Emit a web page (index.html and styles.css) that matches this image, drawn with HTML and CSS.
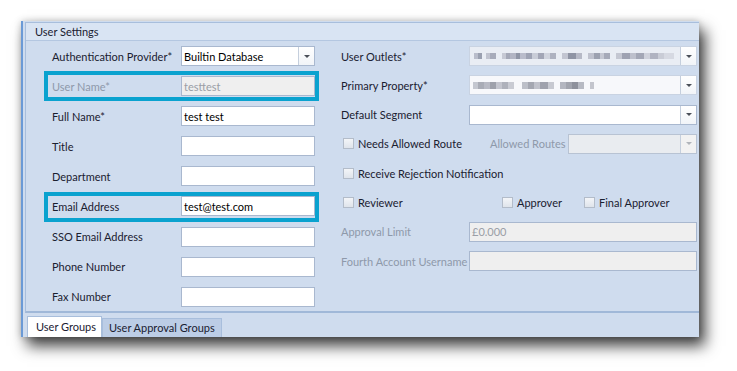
FILE: index.html
```html
<!DOCTYPE html>
<html>
<head>
<meta charset="utf-8">
<link rel="stylesheet" href="styles.css">
</head>
<body>
<div class="window">
  <div class="group">
    <div class="group-header">User Settings</div>
    <div class="group-body">
      <div class="form-left">
        <label class="lbl">Authentication Provider*</label>
        <div class="field combo"><span class="val">Builtin Database</span><span class="btn"><i class="arrow"></i></span></div>
        <label class="lbl disabled">User Name*</label>
        <div class="field readonly"><span class="val">testtest</span></div>
        <label class="lbl">Full Name*</label>
        <div class="field"><span class="val">test test</span></div>
        <label class="lbl">Title</label>
        <div class="field"></div>
        <label class="lbl">Department</label>
        <div class="field"></div>
        <label class="lbl">Email Address</label>
        <div class="field"><span class="val">test@test.com</span></div>
        <label class="lbl">SSO Email Address</label>
        <div class="field"></div>
        <label class="lbl">Phone Number</label>
        <div class="field"></div>
        <label class="lbl">Fax Number</label>
        <div class="field"></div>
      </div>
      <div class="form-right">
        <label class="lbl">User Outlets*</label>
        <div class="field combo blurred"><span class="pix pix-outlets"></span><span class="btn"><i class="arrow"></i></span></div>
        <label class="lbl">Primary Property*</label>
        <div class="field combo blurred light"><span class="pix pix-property"></span><span class="btn"><i class="arrow"></i></span></div>
        <label class="lbl">Default Segment</label>
        <div class="field combo"><span class="val"></span><span class="btn"><i class="arrow"></i></span></div>
        <div class="check-row row-route">
          <span class="check"><i class="box"></i>Needs Allowed Route</span>
          <span class="lbl disabled routes-lbl">Allowed Routes</span>
          <div class="field combo readonly routes"><span class="val"></span><span class="btn"><i class="arrow"></i></span></div>
        </div>
        <div class="check-row">
          <span class="check"><i class="box"></i>Receive Rejection Notification</span>
        </div>
        <div class="check-row row-approve">
          <span class="check reviewer"><i class="box"></i>Reviewer</span>
          <span class="check approver"><i class="box"></i>Approver</span>
          <span class="check"><i class="box"></i>Final Approver</span>
        </div>
        <label class="lbl disabled">Approval Limit</label>
        <div class="field readonly"><span class="val">£0.000</span></div>
        <label class="lbl disabled">Fourth Account Username</label>
        <div class="field readonly"></div>
      </div>
    </div>
  </div>
  <div class="tabs">
    <div class="tab active">User Groups</div>
    <div class="tab">User Approval Groups</div>
  </div>
  <div class="highlight hl-user"></div>
  <div class="highlight hl-email"></div>
</div>
</body>
</html>
```
FILE: styles.css
```css
html, body {
  margin: 0;
  padding: 0;
  background: #ffffff;
}
body {
  font-family: Lato, "Liberation Sans", sans-serif;
  font-size: 11px;
  color: #1a2030;
  min-height: 371px;
  padding-top: 21px;
  padding-left: 21px;
  box-sizing: border-box;
}
.window {
  position: relative;
  width: 678px;
  height: 316px;
  background: #cfdcee;
  border-left: 2px solid #6b9ad6;
  box-sizing: border-box;
  box-shadow: 6px 9px 14px rgba(0, 0, 0, 0.75), 0 0 7px rgba(0, 0, 0, 0.2);
  display: flex;
  flex-direction: column;
}
.group {
  margin: 1px 0 0 2px;
  border-left: 1px solid #a8bedc;
  border-top: 1px solid #a8bedc;
  border-bottom: 2px solid #a0b8d8;
  height: 291px;
  box-sizing: border-box;
  display: flex;
  flex-direction: column;
  flex: none;
}
.group-header {
  height: 18px;
  line-height: 17px;
  padding-left: 9px;
  background: #d9e4f3;
  border-bottom: 1px solid #b4c7e1;
  box-sizing: border-box;
  color: #1a2030;
}
.group-body {
  display: flex;
  padding: 5px 0 0 26px;
  gap: 26px;
}
.form-left {
  display: grid;
  grid-template-columns: 129px 134px;
  grid-auto-rows: 20px;
  row-gap: 10.1px;
}
.form-right {
  display: grid;
  grid-template-columns: 128px 228px;
  grid-auto-rows: 20px;
  row-gap: 9.3px;
}
.lbl {
  display: flex;
  align-items: center;
  white-space: nowrap;
  color: #1a2030;
}
.lbl.disabled {
  color: #8e99aa;
}
.field {
  position: relative;
  display: flex;
  align-items: center;
  background: #ffffff;
  border: 1px solid #a9b8cf;
  box-sizing: border-box;
  height: 20px;
  overflow: hidden;
}
.field .val {
  flex: 1;
  padding-left: 2px;
  color: #000000;
  white-space: nowrap;
}
.field.readonly {
  background: #efefef;
}
.field.readonly .val {
  color: #9a9ea6;
}
.combo .btn {
  width: 15px;
  height: 100%;
  border-left: 1px solid #c5cfdd;
  background: linear-gradient(#ffffff, #f1f4f8);
  display: flex;
  align-items: center;
  justify-content: center;
  flex: none;
  margin-left: auto;
}
.arrow {
  width: 0;
  height: 0;
  border-left: 3px solid transparent;
  border-right: 3px solid transparent;
  border-top: 3px solid #4a4f58;
}
.readonly .btn {
  background: #f2f2f2;
}
.readonly .arrow {
  border-top-color: #b0b4ba;
}
.blurred {
  border-color: #c9d3e2;
  background: #e9edf4;
}
.blurred.light {
  background: #f7f8fb;
}
.pix {
  flex: 1;
  height: 100%;
}
.pix-outlets {
  background:
    linear-gradient(90deg,
      transparent 0 4px, #b9bdcb 4px 8px, #9aa0b0 8px 12px, transparent 12px 16px,
      #c1c4d0 16px 20px, #a7abba 20px 26px, transparent 26px 32px,
      #c6c9d4 32px 36px, #a5a9b8 36px 40px, #b2b5c4 40px 46px, #8f95a6 46px 50px,
      #b9bccb 50px 56px, #9ea3b4 56px 62px, #c8ccd7 62px 68px, #a2a6b6 68px 74px,
      #d0d4de 74px 80px, #aeb2c0 80px 86px, transparent 86px 92px,
      #c2c5d1 92px 98px, #8f94a4 98px 106px, #b6b9c6 106px 112px, transparent 112px 118px,
      #bfc2ce 118px 124px, #9ca1b0 124px 130px, #c5c8d3 130px 134px, #a6aab9 134px 140px,
      transparent 140px 146px, #c4c7d2 146px 152px, #9ea2b2 152px 160px, #bdc0cc 160px 166px,
      #a3a7b6 166px 174px, #cfd2dc 174px 180px, #b0b3c1 180px 188px, #c9ccd6 188px 194px,
      #d6d9e2 194px 204px, transparent 204px) 0 6px / 100% 6px no-repeat;
}
.pix-property {
  background:
    linear-gradient(90deg,
      transparent 0 3px, #c4c7d0 3px 8px, #a9acb6 8px 14px, #b8bac4 14px 20px, #9ea1ab 20px 26px,
      #c3c5ce 26px 32px, #aeb1bb 32px 38px, #c9cbd3 38px 44px, transparent 44px 52px,
      #bcbfc8 52px 58px, #a4a7b1 58px 64px, #c0c2cb 64px 70px, #9fa2ad 70px 78px,
      #c7c9d1 78px 84px, transparent 84px 90px, #b3b6c0 90px 96px, #a1a4ae 96px 102px,
      #8e919c 102px 108px, #b7bac3 108px 114px, transparent 114px 120px,
      #c3c5cd 120px 124px, transparent 124px) 0 6px / 100% 7px no-repeat;
}
.check-row {
  grid-column: 1 / -1;
  display: flex;
  align-items: center;
  white-space: nowrap;
}
.check {
  display: inline-flex;
  align-items: center;
  color: #1a2030;
}
.box {
  width: 11px;
  height: 11px;
  box-sizing: border-box;
  border: 1px solid #b3bcc9;
  background: linear-gradient(#f3f5f8, #dfe4eb);
  margin: 0 4px 0 2px;
}
.row-route .check {
  width: 149px;
}
.routes-lbl {
  width: 78px;
}
.field.routes {
  width: 129px;
  background: #e9ecf0;
  border-color: #b8c3d3;
}
.row-approve .reviewer {
  width: 159px;
}
.row-approve .approver {
  width: 82px;
}
.tabs {
  display: flex;
  align-items: flex-end;
  padding-left: 4px;
  flex: 1;
}
.tab {
  height: 19px;
  line-height: 18px;
  padding: 0 6px;
  border: 1px solid #a8bedc;
  border-bottom: none;
  background: #bccde6;
  color: #1a2030;
  box-sizing: border-box;
  white-space: nowrap;
}
.tab.active {
  height: 21px;
  line-height: 20px;
  background: #ffffff;
  width: 75px;
  padding-left: 8px;
}
.highlight {
  position: absolute;
  border: 4px solid #0aa2cf;
  box-sizing: border-box;
  width: 275px;
  height: 30px;
  left: 21px;
  pointer-events: none;
}
.hl-user {
  top: 50px;
}
.hl-email {
  top: 171px;
}
```
